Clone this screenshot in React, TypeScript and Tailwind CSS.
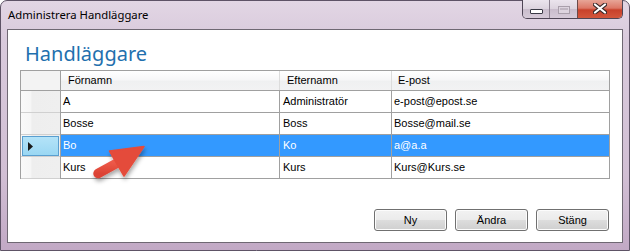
import React from "react";

const rows = [
  { f: "A", e: "Administratör", p: "e-post@epost.se", sel: false },
  { f: "Bosse", e: "Boss", p: "Bosse@mail.se", sel: false },
  { f: "Bo", e: "Ko", p: "a@a.a", sel: true },
  { f: "Kurs", e: "Kurs", p: "Kurs@Kurs.se", sel: false },
];

function WinButton({ label }: { label: string }) {
  return (
    <div className="w-[73px] h-[22px] rounded-[3px] border border-[#707070] bg-[linear-gradient(to_bottom,#f2f2f2_0%,#ebebeb_50%,#dddddd_51%,#cfcfcf_100%)] shadow-[inset_0_0_0_1px_#fcfcfc] flex items-center justify-center text-[11px] text-black">
      {label}
    </div>
  );
}

export default function App() {
  return (
    <div className="relative w-[630px] h-[251px] overflow-hidden bg-white" style={{ fontFamily: '"Liberation Sans", Arial, sans-serif' }}>
      <div className="flex flex-col w-full h-full rounded-t-[7px] border border-[#5e5366] bg-[linear-gradient(to_bottom,#e2d6e4_0%,#d9cadc_15%,#d1bfd4_70%,#c2a9c5_100%)]">
        {/* Title bar */}
        <div className="h-[28px] flex items-start justify-between">
          <div
            className="pl-[7px] pt-[6px] text-[11.3px] leading-[16px] text-black"
            style={{ fontFamily: '"Noto Sans", "Open Sans", sans-serif' }}
          >
            Administrera Handläggare
          </div>
          <div className="mr-[6px] flex h-[19px] -mt-px rounded-b-[5px] border border-t-0 border-[#4f4656] overflow-hidden">
            <div className="w-[27px] h-full border-r border-[#8a7f8e] bg-[linear-gradient(to_bottom,#ebe4ed_0%,#dcd3de_50%,#c9bccc_51%,#d6cad8_100%)] relative">
              <div className="absolute left-[7px] top-[9px] w-[13px] h-[5px] rounded-[1px] border border-[#3a3a46] bg-white" />
            </div>
            <div className="w-[28px] h-full border-r border-[#6b4a4a] bg-[linear-gradient(to_bottom,#ebe4ed_0%,#dcd3de_50%,#c9bccc_51%,#d6cad8_100%)] relative">
              <div className="absolute left-[8px] top-[6px] w-[12px] h-[8px] border border-[#a99fab] bg-[#ddd4df]">
                <div className="m-[1px] h-[2px] border border-[#c0b6c2]" />
              </div>
            </div>
            <div className="w-[44px] h-full bg-[linear-gradient(to_bottom,#e7a597_0%,#dc7766_45%,#c8412b_55%,#d3563c_100%)] relative flex items-center justify-center">
              <svg width="14" height="11" viewBox="0 0 14 11" className="mt-[-1px]">
                <path d="M2 1.5 L12 9.5 M12 1.5 L2 9.5" stroke="#3b2a2a" strokeWidth="4.2" strokeLinecap="round" />
                <path d="M2 1.5 L12 9.5 M12 1.5 L2 9.5" stroke="#ffffff" strokeWidth="2.2" strokeLinecap="round" />
              </svg>
            </div>
          </div>
        </div>

        {/* Client area */}
        <div className="ml-[6px] w-[616px] h-[214px] border border-[#6f6873] bg-white flex flex-col">
          <div
            className="mt-[11px] pl-[17px] text-[20px] leading-[26px] text-[#1f70ae]"
            style={{ fontFamily: '"Noto Sans", "Open Sans", sans-serif' }}
          >
            Handläggare
          </div>

          {/* Grid */}
          <div className="ml-[12px] mt-[3px] w-[590px] border-l border-r border-t border-[#a0a0a0] text-[11px] text-black">
            {/* header */}
            <div className="flex h-[20px] border-b border-[#a0a0a0] bg-[linear-gradient(to_bottom,#ffffff_0%,#f7f7f8_45%,#eff0f1_55%,#f2f2f3_100%)]">
              <div className="w-[39px] bg-[#f3f3f3]" />
              <div className="w-[219px] border-l border-[#a0a0a0] pl-[7px] flex items-center">Förnamn</div>
              <div className="w-[112px] border-l border-[#dcdcdc] pl-[7px] flex items-center">Efternamn</div>
              <div className="w-[218px] border-l border-[#dcdcdc] pl-[6px] flex items-center">E-post</div>
            </div>
            {rows.map((r, i) => (
              <div key={i} className="flex h-[22px]">
                <div className="w-[39px] h-full border-b border-[#d0d0d0] bg-[linear-gradient(to_right,#f9f9f9_0%,#f6f6f6_25%,#eeeeee_28%,#efefef_100%)]">
                  {r.sel && (
                    <div className="h-[20px] mx-[1px] mt-[1px] border border-[#5a9fd0] bg-[linear-gradient(to_bottom,#b4e3f8_0%,#9ad7f3_100%)] flex items-center pl-[5px]">
                      <svg width="5" height="9" viewBox="0 0 5 9">
                        <path d="M0 0 L5 4.5 L0 9 Z" fill="#1a1a1a" />
                      </svg>
                    </div>
                  )}
                </div>
                <div className={`w-[219px] h-full border-l border-b border-[#a0a0a0] pl-[2px] flex items-center ${r.sel ? "bg-[#3399ff] text-white" : ""}`}>{r.f}</div>
                <div className={`w-[112px] h-full border-l border-b border-[#a0a0a0] pl-[3px] flex items-center ${r.sel ? "bg-[#3399ff] text-white" : ""}`}>{r.e}</div>
                <div className={`w-[218px] h-full border-l border-b border-[#a0a0a0] pl-[2px] flex items-center ${r.sel ? "bg-[#3399ff] text-white" : ""}`}>{r.p}</div>
              </div>
            ))}
          </div>

          {/* Buttons */}
          <div className="mt-[30px] pr-[13px] flex justify-end gap-[8px]">
            <WinButton label="Ny" />
            <WinButton label="Ändra" />
            <WinButton label="Stäng" />
          </div>
        </div>
      </div>

      {/* Red annotation arrow */}
      <svg className="absolute left-0 top-0 pointer-events-none" width="630" height="251" viewBox="0 0 630 251">
        <defs>
          <filter id="sh" x="-20%" y="-20%" width="160%" height="160%">
            <feDropShadow dx="1" dy="3" stdDeviation="2" floodColor="#000" floodOpacity="0.35" />
          </filter>
          <linearGradient id="ag" x1="0" y1="0" x2="0" y2="1">
            <stop offset="0" stopColor="#ee5a4a" />
            <stop offset="1" stopColor="#dc4334" />
          </linearGradient>
        </defs>
        <g filter="url(#sh)">
          <line x1="98" y1="173.5" x2="119" y2="162" stroke="url(#ag)" strokeWidth="9.5" strokeLinecap="round" />
          <path d="M144 146.5 L109.5 151 L124 176 Z" fill="#e44b3b" stroke="#e44b3b" strokeWidth="1.5" strokeLinejoin="round" />
        </g>
      </svg>
    </div>
  );
}
